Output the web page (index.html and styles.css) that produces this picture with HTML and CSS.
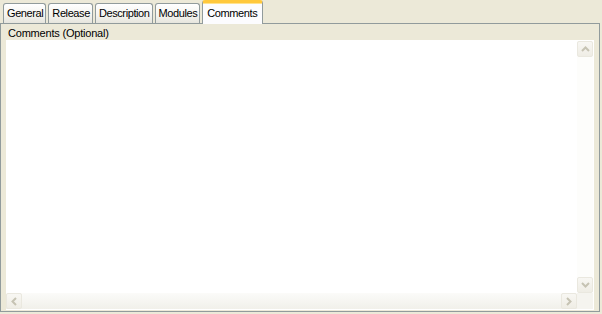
FILE: index.html
```html
<!DOCTYPE html>
<html>
<head>
<meta charset="utf-8">
<link rel="stylesheet" href="styles.css">
</head>
<body>
<div class="tabs">
  <div class="tab">General</div>
  <div class="tab">Release</div>
  <div class="tab">Description</div>
  <div class="tab">Modules</div>
  <div class="tab active">Comments</div>
</div>
<div class="panel">
  <div class="label">Comments (Optional)</div>
  <div class="textbox">
    <div class="content"></div>
    <div class="vbar">
      <div class="btn"><svg width="9" height="6" viewBox="0 0 9 6"><path d="M1 5 L4.5 1.5 L8 5" fill="none" stroke="#c6c3b3" stroke-width="2"/></svg></div>
      <div class="track"></div>
      <div class="btn"><svg width="9" height="6" viewBox="0 0 9 6"><path d="M1 1 L4.5 4.5 L8 1" fill="none" stroke="#c6c3b3" stroke-width="2"/></svg></div>
    </div>
    <div class="hbar">
      <div class="btn"><svg width="6" height="9" viewBox="0 0 6 9"><path d="M5 1 L1.5 4.5 L5 8" fill="none" stroke="#c6c3b3" stroke-width="2"/></svg></div>
      <div class="track"></div>
      <div class="btn"><svg width="6" height="9" viewBox="0 0 6 9"><path d="M1 1 L4.5 4.5 L1 8" fill="none" stroke="#c6c3b3" stroke-width="2"/></svg></div>
    </div>
    <div class="corner"></div>
  </div>
</div>
</body>
</html>
```
FILE: styles.css
```css
html, body {
  margin: 0;
  padding: 0;
}
body {
  width: 602px;
  height: 314px;
  background: #ece9d8;
  font-family: "Liberation Sans", Arial, sans-serif;
  font-size: 11px;
  color: #000;
  overflow: hidden;
}
.tabs {
  display: flex;
  align-items: flex-end;
  gap: 2px;
  height: 23px;
  padding-left: 3px;
  position: relative;
  z-index: 1;
  letter-spacing: -0.4px;
}
.tab {
  height: 19px;
  line-height: 19px;
  padding: 0 2px 0 3px;
  border: 1px solid #919b9c;
  border-bottom: none;
  border-radius: 3px 3px 0 0;
  background: linear-gradient(#ffffff, #f3f3ef 60%, #e6e5dd);
}
.tab.active {
  height: 21px;
  line-height: 20px;
  padding: 0 5px 0 4px;
  margin-bottom: -1px;
  border-top: 3px solid #ffc83c;
  box-shadow: inset 0 1px 0 #ffe28f;
  border-radius: 3px 3px 0 0;
  background: #fcfcfe;
  position: relative;
}
.panel {
  border: 1px solid #919b9c;
  margin-right: 2px;
  padding: 3px 5px 0 5px;
  box-sizing: border-box;
  height: 289px;
  display: flex;
  flex-direction: column;
}
.label {
  height: 13px;
  line-height: 13px;
  padding-left: 2px;
  letter-spacing: -0.2px;
}
.textbox {
  width: 588px;
  height: 270px;
  background: #fff;
  display: grid;
  grid-template-columns: 1fr 16px;
  grid-template-rows: 1fr 16px;
  box-sizing: border-box;
  padding: 1px 1px 1px 0;
}
.vbar {
  display: flex;
  flex-direction: column;
  background: #fdfdfb;
}
.hbar {
  display: flex;
  background: linear-gradient(#fbfbf9, #f1f0ea);
}
.corner {
  background: #f5f4ef;
}
.track {
  flex: 1;
}
.btn {
  width: 14px;
  height: 14px;
  border: 1px solid #eae8df;
  border-radius: 2px;
  background: linear-gradient(#f8f7f3, #efede5);
  display: flex;
  align-items: center;
  justify-content: center;
}
```
